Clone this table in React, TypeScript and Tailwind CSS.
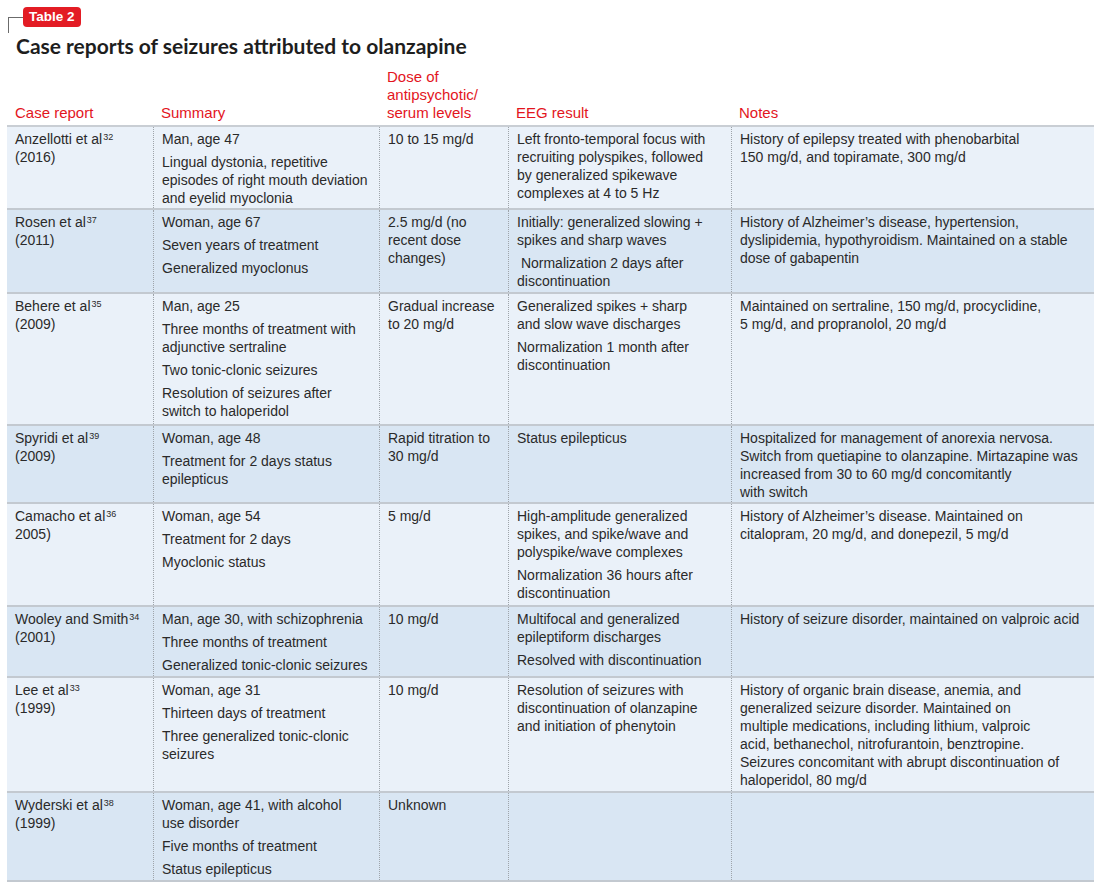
import React from "react";

type Cell = string[][];
type Row = {
  name: string;
  sup: string;
  year: string;
  summary: Cell;
  dose: Cell;
  eeg: Cell;
  notes: Cell;
  h: string;
  dark: boolean;
};

const rows: Row[] = [
  {
    name: "Anzellotti et al",
    sup: "32",
    year: "(2016)",
    summary: [["Man, age 47"], ["Lingual dystonia, repetitive", "episodes of right mouth deviation", "and eyelid myoclonia"]],
    dose: [["10 to 15 mg/d"]],
    eeg: [["Left fronto-temporal focus with", "recruiting polyspikes, followed", "by generalized spikewave", "complexes at 4 to 5 Hz"]],
    notes: [["History of epilepsy treated with phenobarbital", "150 mg/d, and topiramate, 300 mg/d"]],
    h: "h-[83px]",
    dark: false,
  },
  {
    name: "Rosen et al",
    sup: "37",
    year: "(2011)",
    summary: [["Woman, age 67"], ["Seven years of treatment"], ["Generalized myoclonus"]],
    dose: [["2.5 mg/d (no", "recent dose", "changes)"]],
    eeg: [["Initially: generalized slowing +", "spikes and sharp waves"], ["\u00a0Normalization 2 days after", "discontinuation"]],
    notes: [["History of Alzheimer\u2019s disease, hypertension,", "dyslipidemia, hypothyroidism. Maintained on a stable", "dose of gabapentin"]],
    h: "h-[84px]",
    dark: true,
  },
  {
    name: "Behere et al",
    sup: "35",
    year: "(2009)",
    summary: [["Man, age 25"], ["Three months of treatment with", "adjunctive sertraline"], ["Two tonic-clonic seizures"], ["Resolution of seizures after", "switch to haloperidol"]],
    dose: [["Gradual increase", "to 20 mg/d"]],
    eeg: [["Generalized spikes + sharp", "and slow wave discharges"], ["Normalization 1 month after", "discontinuation"]],
    notes: [["Maintained on sertraline, 150 mg/d, procyclidine,", "5 mg/d, and propranolol, 20 mg/d"]],
    h: "h-[132px]",
    dark: false,
  },
  {
    name: "Spyridi et al",
    sup: "39",
    year: "(2009)",
    summary: [["Woman, age 48"], ["Treatment for 2 days status", "epilepticus"]],
    dose: [["Rapid titration to", "30 mg/d"]],
    eeg: [["Status epilepticus"]],
    notes: [["Hospitalized for management of anorexia nervosa.", "Switch from quetiapine to olanzapine. Mirtazapine was", "increased from 30 to 60 mg/d concomitantly", "with switch"]],
    h: "h-[78px]",
    dark: true,
  },
  {
    name: "Camacho et al",
    sup: "36",
    year: "2005)",
    summary: [["Woman, age 54"], ["Treatment for 2 days"], ["Myoclonic status"]],
    dose: [["5 mg/d"]],
    eeg: [["High-amplitude generalized", "spikes, and spike/wave and", "polyspike/wave complexes"], ["Normalization 36 hours after", "discontinuation"]],
    notes: [["History of Alzheimer\u2019s disease. Maintained on", "citalopram, 20 mg/d, and donepezil, 5 mg/d"]],
    h: "h-[103px]",
    dark: false,
  },
  {
    name: "Wooley and Smith",
    sup: "34",
    year: "(2001)",
    summary: [["Man, age 30, with schizophrenia"], ["Three months of treatment"], ["Generalized tonic-clonic seizures"]],
    dose: [["10 mg/d"]],
    eeg: [["Multifocal and generalized", "epileptiform discharges"], ["Resolved with discontinuation"]],
    notes: [["History of seizure disorder, maintained on valproic acid"]],
    h: "h-[71px]",
    dark: true,
  },
  {
    name: "Lee et al",
    sup: "33",
    year: "(1999)",
    summary: [["Woman, age 31"], ["Thirteen days of treatment"], ["Three generalized tonic-clonic", "seizures"]],
    dose: [["10 mg/d"]],
    eeg: [["Resolution of seizures with", "discontinuation of olanzapine", "and initiation of phenytoin"]],
    notes: [[
      "History of organic brain disease, anemia, and",
      "generalized seizure disorder. Maintained on",
      "multiple medications, including lithium, valproic",
      "acid, bethanechol, nitrofurantoin, benztropine.",
      "Seizures concomitant with abrupt discontinuation of",
      "haloperidol, 80 mg/d",
    ]],
    h: "h-[115px]",
    dark: false,
  },
  {
    name: "Wyderski et al",
    sup: "38",
    year: "(1999)",
    summary: [["Woman, age 41, with alcohol", "use disorder"], ["Five months of treatment"], ["Status epilepticus"]],
    dose: [["Unknown"]],
    eeg: [],
    notes: [],
    h: "h-[89px]",
    dark: true,
  },
];

function Paras({ cell }: { cell: Cell }) {
  return (
    <div className="flex flex-col gap-[5px]">
      {cell.map((p, i) => (
        <div key={i}>
          {p.map((line, j) => (
            <div key={j} className="whitespace-nowrap">
              {line}
            </div>
          ))}
        </div>
      ))}
    </div>
  );
}

const cellBase = "pt-[3px] px-[8px]";
const divider = "border-l border-dotted border-[#9ea4aa]";

export default function App() {
  return (
    <div
      className="w-[1100px] h-[888px] bg-white text-[#2a2a2a]"
      style={{ fontFamily: '"Liberation Sans", Arial, sans-serif' }}
    >
      <div className="flex items-start pt-[7px] pl-[8px] h-[33px]">
        <div className="mt-[10px] w-[15px] h-[16px] border-t-[1.5px] border-l-[1.5px] border-[#6b6b6b]" />
        <div className="h-[20px] px-[6px] rounded-[4px] bg-[#e31c24] text-white font-bold text-[13.5px] leading-[20px]">
          Table 2
        </div>
      </div>
      <div
        className="pl-[16px] text-[21px] leading-[26px] font-bold text-[#1e1e1e]"
        style={{ fontFamily: 'Lato, "Liberation Sans", sans-serif' }}
      >
        Case reports of seizures attributed to olanzapine
      </div>

      <div className="ml-[7px] w-[1087px]">
        <div className="grid grid-cols-[146px_226px_129px_223px_363px] h-[68px] items-end border-b-2 border-[#c9ced4] text-[15px] leading-[18px] text-[#e3151d]">
          <div className="px-[8px] pb-[3px]">Case report</div>
          <div className="px-[8px] pb-[3px]">Summary</div>
          <div className="px-[8px] pb-[3px]">
            <div>Dose of</div>
            <div>antipsychotic/</div>
            <div>serum levels</div>
          </div>
          <div className="px-[8px] pb-[3px]">EEG result</div>
          <div className="px-[8px] pb-[3px]">Notes</div>
        </div>

        {rows.map((r, i) => (
          <div
            key={i}
            className={`grid grid-cols-[146px_226px_129px_223px_363px] border-b-2 border-[#c3c9d0] text-[14px] leading-[18px] ${r.h} ${
              r.dark ? "bg-[#d9e6f3]" : "bg-[#eaf1f9]"
            }`}
          >
            <div className={cellBase}>
              <div className="whitespace-nowrap">
                {r.name}
                <sup className="text-[9px] ml-[1px]">{r.sup}</sup>
              </div>
              <div>{r.year}</div>
            </div>
            <div className={`${cellBase} ${divider}`}>
              <Paras cell={r.summary} />
            </div>
            <div className={`${cellBase} ${divider}`}>
              <Paras cell={r.dose} />
            </div>
            <div className={`${cellBase} ${divider}`}>
              <Paras cell={r.eeg} />
            </div>
            <div className={`${cellBase} ${divider}`}>
              <Paras cell={r.notes} />
            </div>
          </div>
        ))}
      </div>
    </div>
  );
}
